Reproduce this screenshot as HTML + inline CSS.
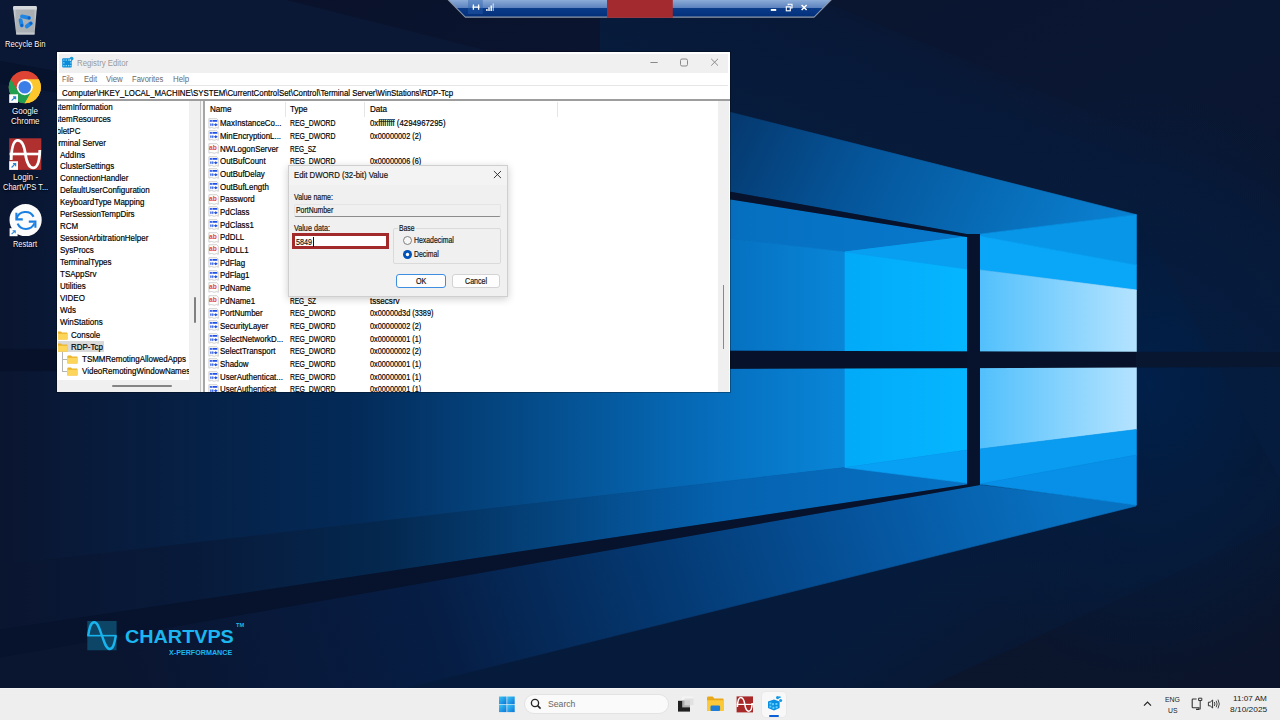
<!DOCTYPE html>
<html><head><meta charset="utf-8">
<style>
*{margin:0;padding:0;box-sizing:border-box}
html,body{width:1280px;height:720px;overflow:hidden;background:#0a1530;font-family:"Liberation Sans",sans-serif;}
.a{position:absolute}
.t{position:absolute;white-space:nowrap;color:#000}
.k{-webkit-text-stroke:0.18px currentColor}
</style></head><body>

<svg class="a" style="left:0;top:0" width="1280" height="720" viewBox="0 0 1280 720">
<defs>
<linearGradient id="bg" x1="0" y1="0" x2="1" y2="1">
<stop offset="0" stop-color="#0a1129"/><stop offset="0.5" stop-color="#0a1733"/><stop offset="1" stop-color="#0b1429"/>
</linearGradient>
<linearGradient id="gCeil" gradientUnits="userSpaceOnUse" x1="640" y1="40" x2="1100" y2="260">
<stop offset="0" stop-color="#0a1836"/><stop offset="0.2" stop-color="#05366a"/><stop offset="0.5" stop-color="#05559a"/><stop offset="1" stop-color="#0a80d0"/>
</linearGradient>
<radialGradient id="glow" gradientUnits="userSpaceOnUse" cx="1150" cy="385" r="300" gradientTransform="translate(1150 385) scale(0.8 1) translate(-1150 -385)">
<stop offset="0" stop-color="#01204a" stop-opacity="1"/><stop offset="0.45" stop-color="#021d42" stop-opacity="0.75"/><stop offset="1" stop-color="#031a3c" stop-opacity="0"/>
</radialGradient>
<linearGradient id="gInCeil" gradientUnits="userSpaceOnUse" x1="0" y1="0" x2="967" y2="0">
<stop offset="0" stop-color="#0a1530"/><stop offset="0.45" stop-color="#05305f"/><stop offset="0.77" stop-color="#0670c0"/><stop offset="1" stop-color="#0878cc"/>
</linearGradient>
<linearGradient id="gWall" gradientUnits="userSpaceOnUse" x1="0" y1="0" x2="845" y2="0">
<stop offset="0" stop-color="#0a1530"/><stop offset="0.42" stop-color="#032a58"/><stop offset="0.86" stop-color="#0670c0"/><stop offset="1" stop-color="#0986d8"/>
</linearGradient>
<linearGradient id="gFloor" gradientUnits="userSpaceOnUse" x1="0" y1="0" x2="967" y2="0">
<stop offset="0" stop-color="#0a1530"/><stop offset="0.2" stop-color="#081a3a"/><stop offset="0.4" stop-color="#04284f"/><stop offset="0.75" stop-color="#0562b0"/><stop offset="1" stop-color="#0872c4"/>
</linearGradient>
<linearGradient id="gBeam" gradientUnits="userSpaceOnUse" x1="150" y1="760" x2="1060" y2="470">
<stop offset="0" stop-color="#0a1530"/><stop offset="0.33" stop-color="#061d44"/><stop offset="0.58" stop-color="#043a74"/><stop offset="0.8" stop-color="#0656a0"/><stop offset="1" stop-color="#0872c2"/>
</linearGradient>
<linearGradient id="gLight" gradientUnits="userSpaceOnUse" x1="980" y1="0" x2="1136" y2="0">
<stop offset="0" stop-color="#52c0fc"/><stop offset="1" stop-color="#b4e3ff"/>
</linearGradient>
<linearGradient id="gBright" gradientUnits="userSpaceOnUse" x1="845" y1="0" x2="967" y2="0">
<stop offset="0" stop-color="#02aaf8"/><stop offset="1" stop-color="#06b6ff"/>
</linearGradient>
</defs>
<rect width="1280" height="720" fill="url(#bg)"/>
<rect width="1280" height="720" fill="url(#glow)"/>
<linearGradient id="gShade" gradientUnits="userSpaceOnUse" x1="1000" y1="520" x2="1120" y2="690"><stop offset="0" stop-color="#051c3e" stop-opacity="0.85"/><stop offset="1" stop-color="#051c3e" stop-opacity="0.1"/></linearGradient>
<polygon points="1136.4,500 1280,470 1280,525 900,700 300,700" fill="url(#gShade)"/>
<linearGradient id="gBand" gradientUnits="userSpaceOnUse" x1="1010" y1="60" x2="930" y2="230"><stop offset="0" stop-color="#071a3a" stop-opacity="0"/><stop offset="0.25" stop-color="#071a3a" stop-opacity="0.75"/><stop offset="1" stop-color="#061c3e" stop-opacity="0.9"/></linearGradient>
<polygon points="600,0 820,0 1280,190 1280,480 1136.4,214.7 600,80" fill="url(#gBand)"/>
<!-- ceiling beam -->
<polygon points="-100,-96.9 1136.4,214.7 980,234.2 967,234.2 -100,43" fill="url(#gCeil)" stroke="url(#gCeil)" stroke-width="0.7" stroke-linejoin="round"/>
<!-- inner ceiling -->
<polygon points="-100,67.7 967,237 845,252 -100,141.6" fill="url(#gInCeil)" stroke="url(#gInCeil)" stroke-width="0.7" stroke-linejoin="round"/>
<!-- wall -->
<polygon points="-100,141.6 845,252 845,467.5 -100,576.9" fill="url(#gWall)" stroke="url(#gWall)" stroke-width="0.7" stroke-linejoin="round"/>
<!-- floor -->
<polygon points="-100,576.9 845,467.5 967,483 967,484.5 -100,644.6" fill="url(#gFloor)" stroke="url(#gFloor)" stroke-width="0.7" stroke-linejoin="round"/>
<!-- floor beam -->
<polygon points="-100,675 980,485 1136,505 1136,506 -100,813.6" fill="url(#gBeam)" stroke="url(#gBeam)" stroke-width="0.7" stroke-linejoin="round"/>
<!-- left panes -->
<polygon points="845,252 967,237 967,358 845,358" fill="url(#gBright)" stroke="url(#gBright)" stroke-width="0.7" stroke-linejoin="round"/>
<polygon points="845,252 967,237 967,269" fill="#089ff0" stroke="#089ff0" stroke-width="0.7" stroke-linejoin="round"/>
<polygon points="845,362 967,362 967,450 845,467.5" fill="url(#gBright)" stroke="url(#gBright)" stroke-width="0.7" stroke-linejoin="round"/>
<polygon points="845,467.5 967,450 967,483" fill="#08a0f5" stroke="#08a0f5" stroke-width="0.7" stroke-linejoin="round"/>
<!-- right panes -->
<polygon points="980,234.2 1136.4,214.7 1136.4,265 980,236" fill="#0896e8" stroke="#0896e8" stroke-width="0.7" stroke-linejoin="round"/>
<polygon points="980,236 1136.4,265 1136.4,290 980,270" fill="#0aa6f8" stroke="#0aa6f8" stroke-width="0.7" stroke-linejoin="round"/>
<polygon points="980,270 1136.4,290 1136.4,358 980,358" fill="url(#gLight)" stroke="url(#gLight)" stroke-width="0.7" stroke-linejoin="round"/>
<polygon points="980,362 1136.4,362 1136.4,429.5 980,449" fill="url(#gLight)" stroke="url(#gLight)" stroke-width="0.7" stroke-linejoin="round"/>
<polygon points="980,449 1136.4,429.5 1136.4,455 980,484" fill="#0a9cf0" stroke="#0a9cf0" stroke-width="0.7" stroke-linejoin="round"/>
<polygon points="980,484 1136.4,455 1136.4,505" fill="#0890e8" stroke="#0890e8" stroke-width="0.7" stroke-linejoin="round"/>
<!-- dark frame lines -->
<polygon points="-100,43 967,234 980,234 980,237 967,237 -100,67.7" fill="#07132c"/>
<polygon points="-100,348.4 1136,351.7 1136,367.5 -100,371.7" fill="#07122a"/>
<polygon points="1136,351.7 1280,352.1 1280,367 1136,367.5" fill="#081630"/>
<rect x="967" y="234" width="13" height="251" fill="#07132c"/>
<polygon points="-100,644.6 967,484.5 980,485 -100,675" fill="#07132c"/>
</svg>
<div class="a" style="left:56.4px;top:51.4px;width:674.2px;height:341.2px;background:rgba(0,0,0,0.3)"></div>
<div class="a" style="left:57px;top:52px;width:673px;height:340px;background:#ffffff"></div>
<div class="a" style="left:59px;top:54px;width:669px;height:18.5px;background:#f0f0f0"></div>
<svg class="a" style="left:61px;top:56px" width="14" height="14" viewBox="0 0 14 14"><rect x="1.2" y="2.2" width="9.6" height="9.4" rx="1" fill="#0a8ad8"/><g fill="#7fdcff"><rect x="2.2" y="3.4" width="1.3" height="1.3"/><rect x="4.6" y="3.4" width="1.3" height="1.3"/><rect x="7" y="3.4" width="1.3" height="1.3"/><rect x="2.2" y="6.2" width="1.3" height="1.3"/><rect x="2.2" y="9" width="1.3" height="1.3"/><rect x="4.6" y="9" width="1.3" height="1.3"/><rect x="7" y="9" width="1.3" height="1.3"/><rect x="9.2" y="9" width="1.3" height="1.3"/><rect x="9.2" y="6.2" width="1.3" height="1.3"/></g><circle cx="10.6" cy="2.6" r="1.9" fill="#1a9ad8"/><circle cx="9.3" cy="4.1" r="0.8" fill="#fff"/></svg>
<div class="t" style="left:77px;top:58px;font-size:8.5px;line-height:10.62px;color:#9a9a9a;transform:scaleX(0.919);transform-origin:0 0;">Registry Editor</div>
<svg class="a" style="left:640px;top:54px" width="88" height="18" viewBox="0 0 88 18"><line x1="10.4" y1="8.5" x2="17.7" y2="8.5" stroke="#8a8a8a" stroke-width="1"/><rect x="40.5" y="5" width="7" height="7" rx="1.5" fill="none" stroke="#8a8a8a" stroke-width="1"/><path d="M71.2 4.8 L78 11.6 M78 4.8 L71.2 11.6" stroke="#8a8a8a" stroke-width="1"/></svg>
<div class="t" style="left:62.1px;top:74px;font-size:8.5px;line-height:10.62px;color:#6a6a6a;transform:scaleX(0.847);transform-origin:0 0;">File</div>
<div class="t" style="left:83.5px;top:74px;font-size:8.5px;line-height:10.62px;color:#6a6a6a;transform:scaleX(0.888);transform-origin:0 0;">Edit</div>
<div class="t" style="left:106px;top:74px;font-size:8.5px;line-height:10.62px;color:#6a6a6a;transform:scaleX(0.917);transform-origin:0 0;">View</div>
<div class="t" style="left:131.9px;top:74px;font-size:8.5px;line-height:10.62px;color:#6a6a6a;transform:scaleX(0.893);transform-origin:0 0;">Favorites</div>
<div class="t" style="left:172.75px;top:74px;font-size:8.5px;line-height:10.62px;color:#6a6a6a;transform:scaleX(0.930);transform-origin:0 0;">Help</div>
<div class="a" style="left:59px;top:85.3px;width:669px;height:1px;background:#e6e6e6"></div>
<div class="t k" style="left:62px;top:88px;font-size:8.5px;line-height:10.62px;color:#000;transform:scaleX(0.924);transform-origin:0 0;">Computer\HKEY_LOCAL_MACHINE\SYSTEM\CurrentControlSet\Control\Terminal Server\WinStations\RDP-Tcp</div>
<div class="a" style="left:57px;top:99.4px;width:673px;height:1.6px;background:#9d9d9d"></div>
<div class="a" style="left:58px;top:101px;width:131px;height:279px;background:#fff;overflow:hidden">
<div class="t k" style="left:-12.22px;top:1px;font-size:8.5px;line-height:10.62px;color:#000;transform:scaleX(0.940);transform-origin:0 0;">SystemInformation</div>
<div class="t k" style="left:-12.22px;top:13px;font-size:8.5px;line-height:10.62px;color:#000;transform:scaleX(0.940);transform-origin:0 0;">SystemResources</div>
<div class="t k" style="left:-10.24px;top:25px;font-size:8.5px;line-height:10.62px;color:#000;transform:scaleX(0.940);transform-origin:0 0;">TabletPC</div>
<div class="t k" style="left:-7.94px;top:37px;font-size:8.5px;line-height:10.62px;color:#000;transform:scaleX(0.940);transform-origin:0 0;">Terminal Server</div>
<div class="t k" style="left:2.0px;top:49px;font-size:8.5px;line-height:10.62px;color:#000;transform:scaleX(0.940);transform-origin:0 0;">AddIns</div>
<div class="t k" style="left:2.0px;top:60px;font-size:8.5px;line-height:10.62px;color:#000;transform:scaleX(0.940);transform-origin:0 0;">ClusterSettings</div>
<div class="t k" style="left:2.0px;top:72px;font-size:8.5px;line-height:10.62px;color:#000;transform:scaleX(0.940);transform-origin:0 0;">ConnectionHandler</div>
<div class="t k" style="left:2.0px;top:84px;font-size:8.5px;line-height:10.62px;color:#000;transform:scaleX(0.940);transform-origin:0 0;">DefaultUserConfiguration</div>
<div class="t k" style="left:2.0px;top:96px;font-size:8.5px;line-height:10.62px;color:#000;transform:scaleX(0.940);transform-origin:0 0;">KeyboardType Mapping</div>
<div class="t k" style="left:2.0px;top:108px;font-size:8.5px;line-height:10.62px;color:#000;transform:scaleX(0.940);transform-origin:0 0;">PerSessionTempDirs</div>
<div class="t k" style="left:2.0px;top:120px;font-size:8.5px;line-height:10.62px;color:#000;transform:scaleX(0.940);transform-origin:0 0;">RCM</div>
<div class="t k" style="left:2.0px;top:132px;font-size:8.5px;line-height:10.62px;color:#000;transform:scaleX(0.940);transform-origin:0 0;">SessionArbitrationHelper</div>
<div class="t k" style="left:2.0px;top:144px;font-size:8.5px;line-height:10.62px;color:#000;transform:scaleX(0.940);transform-origin:0 0;">SysProcs</div>
<div class="t k" style="left:2.0px;top:156px;font-size:8.5px;line-height:10.62px;color:#000;transform:scaleX(0.940);transform-origin:0 0;">TerminalTypes</div>
<div class="t k" style="left:2.0px;top:168px;font-size:8.5px;line-height:10.62px;color:#000;transform:scaleX(0.940);transform-origin:0 0;">TSAppSrv</div>
<div class="t k" style="left:2.0px;top:180px;font-size:8.5px;line-height:10.62px;color:#000;transform:scaleX(0.940);transform-origin:0 0;">Utilities</div>
<div class="t k" style="left:2.0px;top:192px;font-size:8.5px;line-height:10.62px;color:#000;transform:scaleX(0.940);transform-origin:0 0;">VIDEO</div>
<div class="t k" style="left:2.0px;top:204px;font-size:8.5px;line-height:10.62px;color:#000;transform:scaleX(0.940);transform-origin:0 0;">Wds</div>
<div class="t k" style="left:2.0px;top:216px;font-size:8.5px;line-height:10.62px;color:#000;transform:scaleX(0.940);transform-origin:0 0;">WinStations</div>
<div class="a" style="left:0px;top:240.10000000000002px;width:45.599999999999994px;height:11.1px;background:#d9d9d9"></div>
<svg class="a" style="left:-1.4px;top:229.7px" width="11" height="9" viewBox="0 0 11 9"><path d="M0.3 1.3 Q0.3 0.4 1.1 0.4 L4 0.4 L5 1.4 L9.9 1.4 Q10.5 1.4 10.5 2 L10.5 8 Q10.5 8.5 10 8.5 L0.8 8.5 Q0.3 8.5 0.3 8 Z" fill="#eab32a"/><path d="M0.3 2.7 L10.5 2.7 L10.5 8 Q10.5 8.5 10 8.5 L0.8 8.5 Q0.3 8.5 0.3 8 Z" fill="#fdd55a"/></svg>
<div class="t k" style="left:12.8px;top:229px;font-size:8.5px;line-height:10.62px;color:#000;transform:scaleX(0.940);transform-origin:0 0;">Console</div>
<svg class="a" style="left:-1.4px;top:241.6px" width="11" height="9" viewBox="0 0 11 9"><path d="M0.3 1.3 Q0.3 0.4 1.1 0.4 L4 0.4 L5 1.4 L9.9 1.4 Q10.5 1.4 10.5 2 L10.5 8 Q10.5 8.5 10 8.5 L0.8 8.5 Q0.3 8.5 0.3 8 Z" fill="#eab32a"/><path d="M0.3 2.7 L10.5 2.7 L10.5 8 Q10.5 8.5 10 8.5 L0.8 8.5 Q0.3 8.5 0.3 8 Z" fill="#fdd55a"/></svg>
<div class="t k" style="left:12.8px;top:241px;font-size:8.5px;line-height:10.62px;color:#000;transform:scaleX(0.940);transform-origin:0 0;">RDP-Tcp</div>
<div class="a" style="left:4.299999999999997px;top:251px;width:0;height:19px;border-left:0.8px solid #b4b4b4"></div>
<div class="a" style="left:4.299999999999997px;top:258px;width:4.6px;height:0;border-top:0.8px solid #b4b4b4"></div>
<div class="a" style="left:4.299999999999997px;top:270px;width:4.6px;height:0;border-top:0.8px solid #b4b4b4"></div>
<svg class="a" style="left:9.1px;top:253.5px" width="11" height="9" viewBox="0 0 11 9"><path d="M0.3 1.3 Q0.3 0.4 1.1 0.4 L4 0.4 L5 1.4 L9.9 1.4 Q10.5 1.4 10.5 2 L10.5 8 Q10.5 8.5 10 8.5 L0.8 8.5 Q0.3 8.5 0.3 8 Z" fill="#eab32a"/><path d="M0.3 2.7 L10.5 2.7 L10.5 8 Q10.5 8.5 10 8.5 L0.8 8.5 Q0.3 8.5 0.3 8 Z" fill="#fdd55a"/></svg>
<div class="t k" style="left:23.7px;top:253px;font-size:8.5px;line-height:10.62px;color:#000;transform:scaleX(0.940);transform-origin:0 0;">TSMMRemotingAllowedApps</div>
<svg class="a" style="left:9.1px;top:265.5px" width="11" height="9" viewBox="0 0 11 9"><path d="M0.3 1.3 Q0.3 0.4 1.1 0.4 L4 0.4 L5 1.4 L9.9 1.4 Q10.5 1.4 10.5 2 L10.5 8 Q10.5 8.5 10 8.5 L0.8 8.5 Q0.3 8.5 0.3 8 Z" fill="#eab32a"/><path d="M0.3 2.7 L10.5 2.7 L10.5 8 Q10.5 8.5 10 8.5 L0.8 8.5 Q0.3 8.5 0.3 8 Z" fill="#fdd55a"/></svg>
<div class="t k" style="left:23.7px;top:265px;font-size:8.5px;line-height:10.62px;color:#000;transform:scaleX(0.940);transform-origin:0 0;">VideoRemotingWindowNames</div>
</div>
<div class="a" style="left:189.2px;top:101px;width:10.4px;height:279.4px;background:#f0f0f0"></div>
<div class="a" style="left:194px;top:297px;width:1.5px;height:25.5px;background:#808080;border-radius:1px"></div>
<div class="a" style="left:57px;top:380.4px;width:142.6px;height:11.6px;background:#f0f0f0"></div>
<div class="a" style="left:112.4px;top:385px;width:60px;height:1.8px;background:#858585;border-radius:1px"></div>
<div class="a" style="left:199.6px;top:101px;width:1.8px;height:291px;background:#c4c4c4"></div>
<div class="a" style="left:201.4px;top:101px;width:1.8px;height:291px;background:#f6f6f6"></div>
<div class="a" style="left:203.2px;top:101px;width:1.6px;height:291px;background:#a6a6a6"></div>
<div class="t k" style="left:209.5px;top:104px;font-size:8.5px;line-height:10.62px;color:#000;transform:scaleX(0.953);transform-origin:0 0;">Name</div>
<div class="t k" style="left:289.6px;top:104px;font-size:8.5px;line-height:10.62px;color:#000;transform:scaleX(0.950);transform-origin:0 0;">Type</div>
<div class="t k" style="left:369.6px;top:104px;font-size:8.5px;line-height:10.62px;color:#000;transform:scaleX(0.950);transform-origin:0 0;">Data</div>
<div class="a" style="left:285px;top:102px;width:1px;height:15px;background:#e5e5e5"></div>
<div class="a" style="left:364.4px;top:102px;width:1px;height:15px;background:#e5e5e5"></div>
<div class="a" style="left:557px;top:102px;width:1px;height:15px;background:#e5e5e5"></div>
<div class="a" style="left:205px;top:117px;width:513px;height:274.8px;overflow:hidden">
<svg class="a" style="left:2.80px;top:0.80px" width="11" height="11" viewBox="0 0 11 11"><path d="M0.9 0.7 L8.8 0.7 L10.3 2.2 L10.3 10.3 L8.6 9.6 L6.2 10.3 L3.6 9.5 L0.9 10.1 Z" fill="#fdfdfb" stroke="#bdbdbd" stroke-width="0.7"/><g fill="#1f4fe8"><ellipse cx="2.9" cy="2.9" rx="1.3" ry="0.85"/><rect x="4.4" y="2.05" width="5" height="1.7" rx="0.5"/><ellipse cx="2.9" cy="6.8" rx="0.65" ry="1.45"/><ellipse cx="4.8" cy="6.8" rx="0.65" ry="1.45"/><path d="M5.9 6.8 L7.7 5.3 L9.7 6.8 L7.7 8.3 Z"/></g></svg>
<div class="t k" style="left:15px;top:1px;font-size:8.5px;line-height:10.62px;color:#000;transform:scaleX(0.930);transform-origin:0 0;">MaxInstanceCo...</div>
<div class="t k" style="left:84.6px;top:1px;font-size:8.5px;line-height:10.62px;color:#000;transform:scaleX(0.810);transform-origin:0 0;">REG_DWORD</div>
<div class="t k" style="left:164.6px;top:1px;font-size:8.5px;line-height:10.62px;color:#000;transform:scaleX(0.920);transform-origin:0 0;">0xffffffff (4294967295)</div>
<svg class="a" style="left:2.80px;top:13.46px" width="11" height="11" viewBox="0 0 11 11"><path d="M0.9 0.7 L8.8 0.7 L10.3 2.2 L10.3 10.3 L8.6 9.6 L6.2 10.3 L3.6 9.5 L0.9 10.1 Z" fill="#fdfdfb" stroke="#bdbdbd" stroke-width="0.7"/><g fill="#1f4fe8"><ellipse cx="2.9" cy="2.9" rx="1.3" ry="0.85"/><rect x="4.4" y="2.05" width="5" height="1.7" rx="0.5"/><ellipse cx="2.9" cy="6.8" rx="0.65" ry="1.45"/><ellipse cx="4.8" cy="6.8" rx="0.65" ry="1.45"/><path d="M5.9 6.8 L7.7 5.3 L9.7 6.8 L7.7 8.3 Z"/></g></svg>
<div class="t k" style="left:15px;top:14px;font-size:8.5px;line-height:10.62px;color:#000;transform:scaleX(0.930);transform-origin:0 0;">MinEncryptionL...</div>
<div class="t k" style="left:84.6px;top:14px;font-size:8.5px;line-height:10.62px;color:#000;transform:scaleX(0.810);transform-origin:0 0;">REG_DWORD</div>
<div class="t k" style="left:164.6px;top:14px;font-size:8.5px;line-height:10.62px;color:#000;transform:scaleX(0.860);transform-origin:0 0;">0x00000002 (2)</div>
<svg class="a" style="left:2.80px;top:26.12px" width="11" height="11" viewBox="0 0 11 11"><path d="M0.9 0.7 L8.8 0.7 L10.3 2.2 L10.3 10.3 L8.6 9.6 L6.2 10.3 L3.6 9.5 L0.9 10.1 Z" fill="#fdfdfb" stroke="#bdbdbd" stroke-width="0.7"/><text x="1.1" y="7.4" font-family="Liberation Sans" font-size="6.6" font-weight="bold" fill="#e2482c">ab</text></svg>
<div class="t k" style="left:15px;top:27px;font-size:8.5px;line-height:10.62px;color:#000;transform:scaleX(0.930);transform-origin:0 0;">NWLogonServer</div>
<div class="t k" style="left:84.6px;top:27px;font-size:8.5px;line-height:10.62px;color:#000;transform:scaleX(0.765);transform-origin:0 0;">REG_SZ</div>
<svg class="a" style="left:2.80px;top:38.78px" width="11" height="11" viewBox="0 0 11 11"><path d="M0.9 0.7 L8.8 0.7 L10.3 2.2 L10.3 10.3 L8.6 9.6 L6.2 10.3 L3.6 9.5 L0.9 10.1 Z" fill="#fdfdfb" stroke="#bdbdbd" stroke-width="0.7"/><g fill="#1f4fe8"><ellipse cx="2.9" cy="2.9" rx="1.3" ry="0.85"/><rect x="4.4" y="2.05" width="5" height="1.7" rx="0.5"/><ellipse cx="2.9" cy="6.8" rx="0.65" ry="1.45"/><ellipse cx="4.8" cy="6.8" rx="0.65" ry="1.45"/><path d="M5.9 6.8 L7.7 5.3 L9.7 6.8 L7.7 8.3 Z"/></g></svg>
<div class="t k" style="left:15px;top:39px;font-size:8.5px;line-height:10.62px;color:#000;transform:scaleX(0.930);transform-origin:0 0;">OutBufCount</div>
<div class="t k" style="left:84.6px;top:39px;font-size:8.5px;line-height:10.62px;color:#000;transform:scaleX(0.810);transform-origin:0 0;">REG_DWORD</div>
<div class="t k" style="left:164.6px;top:39px;font-size:8.5px;line-height:10.62px;color:#000;transform:scaleX(0.860);transform-origin:0 0;">0x00000006 (6)</div>
<svg class="a" style="left:2.80px;top:51.44px" width="11" height="11" viewBox="0 0 11 11"><path d="M0.9 0.7 L8.8 0.7 L10.3 2.2 L10.3 10.3 L8.6 9.6 L6.2 10.3 L3.6 9.5 L0.9 10.1 Z" fill="#fdfdfb" stroke="#bdbdbd" stroke-width="0.7"/><g fill="#1f4fe8"><ellipse cx="2.9" cy="2.9" rx="1.3" ry="0.85"/><rect x="4.4" y="2.05" width="5" height="1.7" rx="0.5"/><ellipse cx="2.9" cy="6.8" rx="0.65" ry="1.45"/><ellipse cx="4.8" cy="6.8" rx="0.65" ry="1.45"/><path d="M5.9 6.8 L7.7 5.3 L9.7 6.8 L7.7 8.3 Z"/></g></svg>
<div class="t k" style="left:15px;top:52px;font-size:8.5px;line-height:10.62px;color:#000;transform:scaleX(0.930);transform-origin:0 0;">OutBufDelay</div>
<div class="t k" style="left:84.6px;top:52px;font-size:8.5px;line-height:10.62px;color:#000;transform:scaleX(0.810);transform-origin:0 0;">REG_DWORD</div>
<svg class="a" style="left:2.80px;top:64.10px" width="11" height="11" viewBox="0 0 11 11"><path d="M0.9 0.7 L8.8 0.7 L10.3 2.2 L10.3 10.3 L8.6 9.6 L6.2 10.3 L3.6 9.5 L0.9 10.1 Z" fill="#fdfdfb" stroke="#bdbdbd" stroke-width="0.7"/><g fill="#1f4fe8"><ellipse cx="2.9" cy="2.9" rx="1.3" ry="0.85"/><rect x="4.4" y="2.05" width="5" height="1.7" rx="0.5"/><ellipse cx="2.9" cy="6.8" rx="0.65" ry="1.45"/><ellipse cx="4.8" cy="6.8" rx="0.65" ry="1.45"/><path d="M5.9 6.8 L7.7 5.3 L9.7 6.8 L7.7 8.3 Z"/></g></svg>
<div class="t k" style="left:15px;top:65px;font-size:8.5px;line-height:10.62px;color:#000;transform:scaleX(0.930);transform-origin:0 0;">OutBufLength</div>
<div class="t k" style="left:84.6px;top:65px;font-size:8.5px;line-height:10.62px;color:#000;transform:scaleX(0.810);transform-origin:0 0;">REG_DWORD</div>
<svg class="a" style="left:2.80px;top:76.76px" width="11" height="11" viewBox="0 0 11 11"><path d="M0.9 0.7 L8.8 0.7 L10.3 2.2 L10.3 10.3 L8.6 9.6 L6.2 10.3 L3.6 9.5 L0.9 10.1 Z" fill="#fdfdfb" stroke="#bdbdbd" stroke-width="0.7"/><text x="1.1" y="7.4" font-family="Liberation Sans" font-size="6.6" font-weight="bold" fill="#e2482c">ab</text></svg>
<div class="t k" style="left:15px;top:77px;font-size:8.5px;line-height:10.62px;color:#000;transform:scaleX(0.930);transform-origin:0 0;">Password</div>
<div class="t k" style="left:84.6px;top:77px;font-size:8.5px;line-height:10.62px;color:#000;transform:scaleX(0.765);transform-origin:0 0;">REG_SZ</div>
<svg class="a" style="left:2.80px;top:89.42px" width="11" height="11" viewBox="0 0 11 11"><path d="M0.9 0.7 L8.8 0.7 L10.3 2.2 L10.3 10.3 L8.6 9.6 L6.2 10.3 L3.6 9.5 L0.9 10.1 Z" fill="#fdfdfb" stroke="#bdbdbd" stroke-width="0.7"/><g fill="#1f4fe8"><ellipse cx="2.9" cy="2.9" rx="1.3" ry="0.85"/><rect x="4.4" y="2.05" width="5" height="1.7" rx="0.5"/><ellipse cx="2.9" cy="6.8" rx="0.65" ry="1.45"/><ellipse cx="4.8" cy="6.8" rx="0.65" ry="1.45"/><path d="M5.9 6.8 L7.7 5.3 L9.7 6.8 L7.7 8.3 Z"/></g></svg>
<div class="t k" style="left:15px;top:90px;font-size:8.5px;line-height:10.62px;color:#000;transform:scaleX(0.930);transform-origin:0 0;">PdClass</div>
<div class="t k" style="left:84.6px;top:90px;font-size:8.5px;line-height:10.62px;color:#000;transform:scaleX(0.810);transform-origin:0 0;">REG_DWORD</div>
<svg class="a" style="left:2.80px;top:102.08px" width="11" height="11" viewBox="0 0 11 11"><path d="M0.9 0.7 L8.8 0.7 L10.3 2.2 L10.3 10.3 L8.6 9.6 L6.2 10.3 L3.6 9.5 L0.9 10.1 Z" fill="#fdfdfb" stroke="#bdbdbd" stroke-width="0.7"/><g fill="#1f4fe8"><ellipse cx="2.9" cy="2.9" rx="1.3" ry="0.85"/><rect x="4.4" y="2.05" width="5" height="1.7" rx="0.5"/><ellipse cx="2.9" cy="6.8" rx="0.65" ry="1.45"/><ellipse cx="4.8" cy="6.8" rx="0.65" ry="1.45"/><path d="M5.9 6.8 L7.7 5.3 L9.7 6.8 L7.7 8.3 Z"/></g></svg>
<div class="t k" style="left:15px;top:103px;font-size:8.5px;line-height:10.62px;color:#000;transform:scaleX(0.930);transform-origin:0 0;">PdClass1</div>
<div class="t k" style="left:84.6px;top:103px;font-size:8.5px;line-height:10.62px;color:#000;transform:scaleX(0.810);transform-origin:0 0;">REG_DWORD</div>
<svg class="a" style="left:2.80px;top:114.74px" width="11" height="11" viewBox="0 0 11 11"><path d="M0.9 0.7 L8.8 0.7 L10.3 2.2 L10.3 10.3 L8.6 9.6 L6.2 10.3 L3.6 9.5 L0.9 10.1 Z" fill="#fdfdfb" stroke="#bdbdbd" stroke-width="0.7"/><text x="1.1" y="7.4" font-family="Liberation Sans" font-size="6.6" font-weight="bold" fill="#e2482c">ab</text></svg>
<div class="t k" style="left:15px;top:115px;font-size:8.5px;line-height:10.62px;color:#000;transform:scaleX(0.930);transform-origin:0 0;">PdDLL</div>
<div class="t k" style="left:84.6px;top:115px;font-size:8.5px;line-height:10.62px;color:#000;transform:scaleX(0.765);transform-origin:0 0;">REG_SZ</div>
<svg class="a" style="left:2.80px;top:127.40px" width="11" height="11" viewBox="0 0 11 11"><path d="M0.9 0.7 L8.8 0.7 L10.3 2.2 L10.3 10.3 L8.6 9.6 L6.2 10.3 L3.6 9.5 L0.9 10.1 Z" fill="#fdfdfb" stroke="#bdbdbd" stroke-width="0.7"/><text x="1.1" y="7.4" font-family="Liberation Sans" font-size="6.6" font-weight="bold" fill="#e2482c">ab</text></svg>
<div class="t k" style="left:15px;top:128px;font-size:8.5px;line-height:10.62px;color:#000;transform:scaleX(0.930);transform-origin:0 0;">PdDLL1</div>
<div class="t k" style="left:84.6px;top:128px;font-size:8.5px;line-height:10.62px;color:#000;transform:scaleX(0.765);transform-origin:0 0;">REG_SZ</div>
<svg class="a" style="left:2.80px;top:140.06px" width="11" height="11" viewBox="0 0 11 11"><path d="M0.9 0.7 L8.8 0.7 L10.3 2.2 L10.3 10.3 L8.6 9.6 L6.2 10.3 L3.6 9.5 L0.9 10.1 Z" fill="#fdfdfb" stroke="#bdbdbd" stroke-width="0.7"/><g fill="#1f4fe8"><ellipse cx="2.9" cy="2.9" rx="1.3" ry="0.85"/><rect x="4.4" y="2.05" width="5" height="1.7" rx="0.5"/><ellipse cx="2.9" cy="6.8" rx="0.65" ry="1.45"/><ellipse cx="4.8" cy="6.8" rx="0.65" ry="1.45"/><path d="M5.9 6.8 L7.7 5.3 L9.7 6.8 L7.7 8.3 Z"/></g></svg>
<div class="t k" style="left:15px;top:141px;font-size:8.5px;line-height:10.62px;color:#000;transform:scaleX(0.930);transform-origin:0 0;">PdFlag</div>
<div class="t k" style="left:84.6px;top:141px;font-size:8.5px;line-height:10.62px;color:#000;transform:scaleX(0.810);transform-origin:0 0;">REG_DWORD</div>
<svg class="a" style="left:2.80px;top:152.72px" width="11" height="11" viewBox="0 0 11 11"><path d="M0.9 0.7 L8.8 0.7 L10.3 2.2 L10.3 10.3 L8.6 9.6 L6.2 10.3 L3.6 9.5 L0.9 10.1 Z" fill="#fdfdfb" stroke="#bdbdbd" stroke-width="0.7"/><g fill="#1f4fe8"><ellipse cx="2.9" cy="2.9" rx="1.3" ry="0.85"/><rect x="4.4" y="2.05" width="5" height="1.7" rx="0.5"/><ellipse cx="2.9" cy="6.8" rx="0.65" ry="1.45"/><ellipse cx="4.8" cy="6.8" rx="0.65" ry="1.45"/><path d="M5.9 6.8 L7.7 5.3 L9.7 6.8 L7.7 8.3 Z"/></g></svg>
<div class="t k" style="left:15px;top:153px;font-size:8.5px;line-height:10.62px;color:#000;transform:scaleX(0.930);transform-origin:0 0;">PdFlag1</div>
<div class="t k" style="left:84.6px;top:153px;font-size:8.5px;line-height:10.62px;color:#000;transform:scaleX(0.810);transform-origin:0 0;">REG_DWORD</div>
<svg class="a" style="left:2.80px;top:165.38px" width="11" height="11" viewBox="0 0 11 11"><path d="M0.9 0.7 L8.8 0.7 L10.3 2.2 L10.3 10.3 L8.6 9.6 L6.2 10.3 L3.6 9.5 L0.9 10.1 Z" fill="#fdfdfb" stroke="#bdbdbd" stroke-width="0.7"/><text x="1.1" y="7.4" font-family="Liberation Sans" font-size="6.6" font-weight="bold" fill="#e2482c">ab</text></svg>
<div class="t k" style="left:15px;top:166px;font-size:8.5px;line-height:10.62px;color:#000;transform:scaleX(0.930);transform-origin:0 0;">PdName</div>
<div class="t k" style="left:84.6px;top:166px;font-size:8.5px;line-height:10.62px;color:#000;transform:scaleX(0.765);transform-origin:0 0;">REG_SZ</div>
<svg class="a" style="left:2.80px;top:178.04px" width="11" height="11" viewBox="0 0 11 11"><path d="M0.9 0.7 L8.8 0.7 L10.3 2.2 L10.3 10.3 L8.6 9.6 L6.2 10.3 L3.6 9.5 L0.9 10.1 Z" fill="#fdfdfb" stroke="#bdbdbd" stroke-width="0.7"/><text x="1.1" y="7.4" font-family="Liberation Sans" font-size="6.6" font-weight="bold" fill="#e2482c">ab</text></svg>
<div class="t k" style="left:15px;top:179px;font-size:8.5px;line-height:10.62px;color:#000;transform:scaleX(0.930);transform-origin:0 0;">PdName1</div>
<div class="t k" style="left:84.6px;top:179px;font-size:8.5px;line-height:10.62px;color:#000;transform:scaleX(0.765);transform-origin:0 0;">REG_SZ</div>
<div class="t k" style="left:164.6px;top:179px;font-size:8.5px;line-height:10.62px;color:#000;transform:scaleX(0.950);transform-origin:0 0;">tssecsrv</div>
<svg class="a" style="left:2.80px;top:190.70px" width="11" height="11" viewBox="0 0 11 11"><path d="M0.9 0.7 L8.8 0.7 L10.3 2.2 L10.3 10.3 L8.6 9.6 L6.2 10.3 L3.6 9.5 L0.9 10.1 Z" fill="#fdfdfb" stroke="#bdbdbd" stroke-width="0.7"/><g fill="#1f4fe8"><ellipse cx="2.9" cy="2.9" rx="1.3" ry="0.85"/><rect x="4.4" y="2.05" width="5" height="1.7" rx="0.5"/><ellipse cx="2.9" cy="6.8" rx="0.65" ry="1.45"/><ellipse cx="4.8" cy="6.8" rx="0.65" ry="1.45"/><path d="M5.9 6.8 L7.7 5.3 L9.7 6.8 L7.7 8.3 Z"/></g></svg>
<div class="t k" style="left:15px;top:191px;font-size:8.5px;line-height:10.62px;color:#000;transform:scaleX(0.930);transform-origin:0 0;">PortNumber</div>
<div class="t k" style="left:84.6px;top:191px;font-size:8.5px;line-height:10.62px;color:#000;transform:scaleX(0.810);transform-origin:0 0;">REG_DWORD</div>
<div class="t k" style="left:164.6px;top:191px;font-size:8.5px;line-height:10.62px;color:#000;transform:scaleX(0.860);transform-origin:0 0;">0x00000d3d (3389)</div>
<svg class="a" style="left:2.80px;top:203.36px" width="11" height="11" viewBox="0 0 11 11"><path d="M0.9 0.7 L8.8 0.7 L10.3 2.2 L10.3 10.3 L8.6 9.6 L6.2 10.3 L3.6 9.5 L0.9 10.1 Z" fill="#fdfdfb" stroke="#bdbdbd" stroke-width="0.7"/><g fill="#1f4fe8"><ellipse cx="2.9" cy="2.9" rx="1.3" ry="0.85"/><rect x="4.4" y="2.05" width="5" height="1.7" rx="0.5"/><ellipse cx="2.9" cy="6.8" rx="0.65" ry="1.45"/><ellipse cx="4.8" cy="6.8" rx="0.65" ry="1.45"/><path d="M5.9 6.8 L7.7 5.3 L9.7 6.8 L7.7 8.3 Z"/></g></svg>
<div class="t k" style="left:15px;top:204px;font-size:8.5px;line-height:10.62px;color:#000;transform:scaleX(0.930);transform-origin:0 0;">SecurityLayer</div>
<div class="t k" style="left:84.6px;top:204px;font-size:8.5px;line-height:10.62px;color:#000;transform:scaleX(0.810);transform-origin:0 0;">REG_DWORD</div>
<div class="t k" style="left:164.6px;top:204px;font-size:8.5px;line-height:10.62px;color:#000;transform:scaleX(0.860);transform-origin:0 0;">0x00000002 (2)</div>
<svg class="a" style="left:2.80px;top:216.02px" width="11" height="11" viewBox="0 0 11 11"><path d="M0.9 0.7 L8.8 0.7 L10.3 2.2 L10.3 10.3 L8.6 9.6 L6.2 10.3 L3.6 9.5 L0.9 10.1 Z" fill="#fdfdfb" stroke="#bdbdbd" stroke-width="0.7"/><g fill="#1f4fe8"><ellipse cx="2.9" cy="2.9" rx="1.3" ry="0.85"/><rect x="4.4" y="2.05" width="5" height="1.7" rx="0.5"/><ellipse cx="2.9" cy="6.8" rx="0.65" ry="1.45"/><ellipse cx="4.8" cy="6.8" rx="0.65" ry="1.45"/><path d="M5.9 6.8 L7.7 5.3 L9.7 6.8 L7.7 8.3 Z"/></g></svg>
<div class="t k" style="left:15px;top:217px;font-size:8.5px;line-height:10.62px;color:#000;transform:scaleX(0.930);transform-origin:0 0;">SelectNetworkD...</div>
<div class="t k" style="left:84.6px;top:217px;font-size:8.5px;line-height:10.62px;color:#000;transform:scaleX(0.810);transform-origin:0 0;">REG_DWORD</div>
<div class="t k" style="left:164.6px;top:217px;font-size:8.5px;line-height:10.62px;color:#000;transform:scaleX(0.860);transform-origin:0 0;">0x00000001 (1)</div>
<svg class="a" style="left:2.80px;top:228.68px" width="11" height="11" viewBox="0 0 11 11"><path d="M0.9 0.7 L8.8 0.7 L10.3 2.2 L10.3 10.3 L8.6 9.6 L6.2 10.3 L3.6 9.5 L0.9 10.1 Z" fill="#fdfdfb" stroke="#bdbdbd" stroke-width="0.7"/><g fill="#1f4fe8"><ellipse cx="2.9" cy="2.9" rx="1.3" ry="0.85"/><rect x="4.4" y="2.05" width="5" height="1.7" rx="0.5"/><ellipse cx="2.9" cy="6.8" rx="0.65" ry="1.45"/><ellipse cx="4.8" cy="6.8" rx="0.65" ry="1.45"/><path d="M5.9 6.8 L7.7 5.3 L9.7 6.8 L7.7 8.3 Z"/></g></svg>
<div class="t k" style="left:15px;top:229px;font-size:8.5px;line-height:10.62px;color:#000;transform:scaleX(0.930);transform-origin:0 0;">SelectTransport</div>
<div class="t k" style="left:84.6px;top:229px;font-size:8.5px;line-height:10.62px;color:#000;transform:scaleX(0.810);transform-origin:0 0;">REG_DWORD</div>
<div class="t k" style="left:164.6px;top:229px;font-size:8.5px;line-height:10.62px;color:#000;transform:scaleX(0.860);transform-origin:0 0;">0x00000002 (2)</div>
<svg class="a" style="left:2.80px;top:241.34px" width="11" height="11" viewBox="0 0 11 11"><path d="M0.9 0.7 L8.8 0.7 L10.3 2.2 L10.3 10.3 L8.6 9.6 L6.2 10.3 L3.6 9.5 L0.9 10.1 Z" fill="#fdfdfb" stroke="#bdbdbd" stroke-width="0.7"/><g fill="#1f4fe8"><ellipse cx="2.9" cy="2.9" rx="1.3" ry="0.85"/><rect x="4.4" y="2.05" width="5" height="1.7" rx="0.5"/><ellipse cx="2.9" cy="6.8" rx="0.65" ry="1.45"/><ellipse cx="4.8" cy="6.8" rx="0.65" ry="1.45"/><path d="M5.9 6.8 L7.7 5.3 L9.7 6.8 L7.7 8.3 Z"/></g></svg>
<div class="t k" style="left:15px;top:242px;font-size:8.5px;line-height:10.62px;color:#000;transform:scaleX(0.930);transform-origin:0 0;">Shadow</div>
<div class="t k" style="left:84.6px;top:242px;font-size:8.5px;line-height:10.62px;color:#000;transform:scaleX(0.810);transform-origin:0 0;">REG_DWORD</div>
<div class="t k" style="left:164.6px;top:242px;font-size:8.5px;line-height:10.62px;color:#000;transform:scaleX(0.860);transform-origin:0 0;">0x00000001 (1)</div>
<svg class="a" style="left:2.80px;top:254.00px" width="11" height="11" viewBox="0 0 11 11"><path d="M0.9 0.7 L8.8 0.7 L10.3 2.2 L10.3 10.3 L8.6 9.6 L6.2 10.3 L3.6 9.5 L0.9 10.1 Z" fill="#fdfdfb" stroke="#bdbdbd" stroke-width="0.7"/><g fill="#1f4fe8"><ellipse cx="2.9" cy="2.9" rx="1.3" ry="0.85"/><rect x="4.4" y="2.05" width="5" height="1.7" rx="0.5"/><ellipse cx="2.9" cy="6.8" rx="0.65" ry="1.45"/><ellipse cx="4.8" cy="6.8" rx="0.65" ry="1.45"/><path d="M5.9 6.8 L7.7 5.3 L9.7 6.8 L7.7 8.3 Z"/></g></svg>
<div class="t k" style="left:15px;top:255px;font-size:8.5px;line-height:10.62px;color:#000;transform:scaleX(0.930);transform-origin:0 0;">UserAuthenticat...</div>
<div class="t k" style="left:84.6px;top:255px;font-size:8.5px;line-height:10.62px;color:#000;transform:scaleX(0.810);transform-origin:0 0;">REG_DWORD</div>
<div class="t k" style="left:164.6px;top:255px;font-size:8.5px;line-height:10.62px;color:#000;transform:scaleX(0.860);transform-origin:0 0;">0x00000001 (1)</div>
<svg class="a" style="left:2.80px;top:266.66px" width="11" height="11" viewBox="0 0 11 11"><path d="M0.9 0.7 L8.8 0.7 L10.3 2.2 L10.3 10.3 L8.6 9.6 L6.2 10.3 L3.6 9.5 L0.9 10.1 Z" fill="#fdfdfb" stroke="#bdbdbd" stroke-width="0.7"/><g fill="#1f4fe8"><ellipse cx="2.9" cy="2.9" rx="1.3" ry="0.85"/><rect x="4.4" y="2.05" width="5" height="1.7" rx="0.5"/><ellipse cx="2.9" cy="6.8" rx="0.65" ry="1.45"/><ellipse cx="4.8" cy="6.8" rx="0.65" ry="1.45"/><path d="M5.9 6.8 L7.7 5.3 L9.7 6.8 L7.7 8.3 Z"/></g></svg>
<div class="t k" style="left:15px;top:267px;font-size:8.5px;line-height:10.62px;color:#000;transform:scaleX(0.930);transform-origin:0 0;">UserAuthenticat</div>
<div class="t k" style="left:84.6px;top:267px;font-size:8.5px;line-height:10.62px;color:#000;transform:scaleX(0.810);transform-origin:0 0;">REG_DWORD</div>
<div class="t k" style="left:164.6px;top:267px;font-size:8.5px;line-height:10.62px;color:#000;transform:scaleX(0.860);transform-origin:0 0;">0x00000001 (1)</div>
</div>
<div class="a" style="left:718px;top:101px;width:10.5px;height:291px;background:#efefef"></div>
<div class="a" style="left:722.7px;top:285.3px;width:1.2px;height:64px;background:#888"></div>
<div class="a" style="left:287.5px;top:165px;width:220px;height:132px;background:#f0f0f0;border:1px solid #cfcfcf;box-shadow:0 2px 8px rgba(0,0,0,0.2)"></div>
<div class="a" style="left:288.5px;top:166px;width:218px;height:19px;background:#f3f3f3"></div>
<div class="t k" style="left:293.5px;top:170px;font-size:8.5px;line-height:10.62px;color:#111;transform:scaleX(0.914);transform-origin:0 0;">Edit DWORD (32-bit) Value</div>
<svg class="a" style="left:492px;top:169px" width="11" height="11" viewBox="0 0 11 11"><path d="M1.9 2 L9 9.1 M9 2 L1.9 9.1" stroke="#222" stroke-width="0.9"/></svg>
<div class="t k" style="left:294px;top:192px;font-size:8.4px;line-height:10.5px;color:#111;transform:scaleX(0.840);transform-origin:0 0;">Value name:</div>
<div class="a" style="left:294.4px;top:203.7px;width:206.2px;height:13.8px;background:#f0f0f0;border:1px solid #e4e4e4;border-bottom:1.6px solid #8c8c8c;border-radius:2px"></div>
<div class="t k" style="left:296.1px;top:205px;font-size:8.4px;line-height:10.5px;color:#111;transform:scaleX(0.824);transform-origin:0 0;">PortNumber</div>
<div class="t k" style="left:294px;top:223px;font-size:8.4px;line-height:10.5px;color:#111;transform:scaleX(0.860);transform-origin:0 0;">Value data:</div>
<div class="a" style="left:292.3px;top:233.1px;width:96.5px;height:15.7px;background:#fff;border:3.2px solid #a32a2a"></div>
<div class="t k" style="left:296px;top:237px;font-size:8.4px;line-height:10.5px;color:#111;transform:scaleX(0.856);transform-origin:0 0;">5849</div>
<div class="a" style="left:312.6px;top:237px;width:0.9px;height:9.5px;background:#111"></div>
<div class="a" style="left:393px;top:228px;width:108px;height:36px;border:1px solid #dadada;border-radius:2px"></div>
<div class="a" style="left:398px;top:224px;width:18px;height:8px;background:#f0f0f0"></div>
<div class="t k" style="left:399.4px;top:223px;font-size:8.4px;line-height:10.5px;color:#111;transform:scaleX(0.815);transform-origin:0 0;">Base</div>
<svg class="a" style="left:401px;top:233.5px" width="13" height="27" viewBox="0 0 13 27"><circle cx="6.5" cy="6.5" r="4" fill="#f6f6f6" stroke="#808080" stroke-width="1"/><circle cx="6.5" cy="20.5" r="4.5" fill="#0052b8"/><circle cx="6.5" cy="20.5" r="1.7" fill="#fff"/></svg>
<div class="t k" style="left:414.2px;top:235px;font-size:8.4px;line-height:10.5px;color:#111;transform:scaleX(0.824);transform-origin:0 0;">Hexadecimal</div>
<div class="t k" style="left:414.1px;top:249px;font-size:8.4px;line-height:10.5px;color:#111;transform:scaleX(0.821);transform-origin:0 0;">Decimal</div>
<div class="a" style="left:396.4px;top:273.9px;width:49.2px;height:14.3px;background:#fdfdfd;border:1.5px solid #3d8de0;border-radius:3px"></div>
<div class="t k" style="left:415.8px;top:276px;font-size:8.4px;line-height:10.5px;color:#111;transform:scaleX(0.857);transform-origin:0 0;">OK</div>
<div class="a" style="left:452.2px;top:274.3px;width:48.1px;height:13.4px;background:#fdfdfd;border:1px solid #d3d3d3;border-radius:3px"></div>
<div class="t k" style="left:464.9px;top:276px;font-size:8.4px;line-height:10.5px;color:#111;transform:scaleX(0.849);transform-origin:0 0;">Cancel</div>
<svg class="a" style="left:0;top:0" width="56" height="260" viewBox="0 0 56 260"><defs><linearGradient id="binG" x1="0" y1="0" x2="1" y2="0"><stop offset="0" stop-color="#d4d8dc"/><stop offset="0.14" stop-color="#aeb3b8"/><stop offset="0.86" stop-color="#a9aeb3"/><stop offset="1" stop-color="#cdd1d5"/></linearGradient></defs><path d="M13.2 8.6 L36.8 8.6 L34.5 34.5 L16.2 34.5 Z" fill="url(#binG)"/><path d="M13 7.2 Q13.1 6 14.3 6 L35.7 6 Q36.9 6 36.9 7.2 L36.8 9.6 L13.2 9.6 Z" fill="#d6d9dc"/><path d="M16.3 32.6 L34.5 32.6 L34.4 34.6 L16.5 34.6 Z" fill="#c4c8cc"/><g fill="none" stroke="#1f86e4" stroke-width="3.9" stroke-linecap="round"><path d="M22 16.4 L29 17.9"/><path d="M20.6 20.2 L21.8 25.4"/><path d="M30.8 23.4 L26.8 26.4"/></g><g fill="#0d5fc4"><circle cx="29" cy="17.9" r="1.4"/><circle cx="21.8" cy="25.4" r="1.4"/><circle cx="30.8" cy="23.4" r="1.4"/></g><circle cx="24.8" cy="87.2" r="16" fill="#dd4433"/><path d="M24.8 87.2 L10.9 79.2 A16 16 0 0 0 24.8 103.2 Z" fill="#22a050"/><path d="M24.8 87.2 L38.7 79.2 A16 16 0 0 1 24.8 103.2 Z" fill="#fbc72c"/><path d="M24.8 79.2 L38.7 79.2 A16 16 0 0 0 10.9 79.2 L17.9 91.2 Z" fill="#dd4433"/><path d="M17.9 91.2 L24.8 103.2 L31.7 91.2 Z" fill="#22a050"/><path d="M31.7 91.2 L24.8 103.2 A16 16 0 0 0 38.7 79.2 L24.8 79.2 Z" fill="#fbc72c"/><circle cx="24.8" cy="87.2" r="8" fill="#fff"/><circle cx="24.8" cy="87.2" r="6.3" fill="#3b7ee8"/><rect x="9.2" y="94.3" width="8.8" height="8.6" fill="#fdfdfd"/><path d="M11.6 100.6 L15.4 96.8 M13 96.8 L15.6 96.8 L15.6 99.3" stroke="#2b86d8" stroke-width="1.2" fill="none"/><rect x="9.2" y="138.3" width="32.1" height="31.6" fill="#b02f2f"/><path d="M9.6 154 L41 154" stroke="#fff" stroke-width="2.6"/><path d="M11.2 160 C11.5 146 13.5 140.3 17.8 140.3 C22.3 140.3 24.3 146 25.4 154 C26.6 162 28.5 167.8 33.2 167.8 C37.8 167.8 39.6 161 39.8 150" fill="none" stroke="#fff" stroke-width="2.8"/><rect x="9.2" y="161.2" width="8.8" height="8.7" fill="#fdfdfd"/><path d="M11.6 167.5 L15.4 163.7 M13 163.7 L15.6 163.7 L15.6 166.2" stroke="#2b86d8" stroke-width="1.2" fill="none"/><circle cx="25.6" cy="220" r="16.1" fill="#fbfbfb"/><g fill="none" stroke="#1a7fe2" stroke-width="2.1"><path d="M16.6 218.8 A9.2 9.2 0 0 1 33.6 216.8"/><path d="M16.4 212.8 L16.4 219.4 L22.8 219.4"/><path d="M17.6 223.6 A9.2 9.2 0 0 0 34.4 223.4"/><path d="M35.4 227.8 L35.4 221.6 L28.8 221.6"/></g><rect x="9.6" y="228.2" width="8" height="8" fill="#fdfdfd"/><path d="M11.6 234.2 L15 230.8 M12.6 230.8 L15.2 230.8 L15.2 233.2" stroke="#2b86d8" stroke-width="1.1" fill="none"/></svg>
<div class="t" style="left:5.1px;top:39px;font-size:8.6px;line-height:10.75px;color:#fff;transform:scaleX(0.890);transform-origin:0 0;text-shadow:0 0 1px #000,0 1px 1.5px #000;">Recycle Bin</div>
<div class="t" style="left:11.7px;top:106px;font-size:8.6px;line-height:10.75px;color:#fff;transform:scaleX(0.938);transform-origin:0 0;text-shadow:0 0 1px #000,0 1px 1.5px #000;">Google</div>
<div class="t" style="left:11px;top:116px;font-size:8.6px;line-height:10.75px;color:#fff;transform:scaleX(0.935);transform-origin:0 0;text-shadow:0 0 1px #000,0 1px 1.5px #000;">Chrome</div>
<div class="t" style="left:12.5px;top:172px;font-size:8.6px;line-height:10.75px;color:#fff;transform:scaleX(0.958);transform-origin:0 0;text-shadow:0 0 1px #000,0 1px 1.5px #000;">Login -</div>
<div class="t" style="left:2.9px;top:182px;font-size:8.6px;line-height:10.75px;color:#fff;transform:scaleX(0.870);transform-origin:0 0;text-shadow:0 0 1px #000,0 1px 1.5px #000;">ChartVPS T...</div>
<div class="t" style="left:13.3px;top:239px;font-size:8.6px;line-height:10.75px;color:#fff;transform:scaleX(0.866);transform-origin:0 0;text-shadow:0 0 1px #000,0 1px 1.5px #000;">Restart</div>
<svg class="a" style="left:86px;top:620px" width="32" height="32" viewBox="0 0 32 32"><rect x="1.3" y="1" width="29.3" height="29.3" fill="#0c4565"/><path d="M1.3 15.65 L30.6 15.65" stroke="#18b4ee" stroke-width="1.6"/><path d="M2.2 15.65 C3.6 6.5 5 2.3 8.3 2.3 C11.8 2.3 13.5 9 15.95 15.65 C18.4 22.3 20.1 29 23.6 29 C26.9 29 28.4 24.6 29.8 15.65" fill="none" stroke="#18b4ee" stroke-width="2.4"/></svg>
<div class="t" style="left:124.8px;top:625px;font-size:19.2px;line-height:24.0px;color:#1cb6f0;transform:scaleX(1.031);transform-origin:0 0;font-weight:bold;">CHARTVPS</div>
<div class="t" style="left:235.8px;top:622px;font-size:5.6px;line-height:7.0px;color:#1cb6f0;transform:scaleX(1.014);transform-origin:0 0;font-weight:bold;">TM</div>
<div class="t" style="left:169.4px;top:648px;font-size:7.2px;line-height:9.0px;color:#1cb6f0;transform:scaleX(0.995);transform-origin:0 0;font-weight:bold;">X-PERFORMANCE</div>
<svg class="a" style="left:440px;top:0" width="400" height="20" viewBox="440 0 400 20"><defs><linearGradient id="rdpG" x1="0" y1="0" x2="0" y2="1"><stop offset="0" stop-color="#8cacd8"/><stop offset="0.46" stop-color="#5e84bf"/><stop offset="0.5" stop-color="#0a3c8a"/><stop offset="1" stop-color="#03307a"/></linearGradient></defs><path d="M447.6 0 L831.8 0 L814.2 17.8 L465.2 17.8 Z" fill="#8c98aa"/><path d="M449.2 0 L830.2 0 L814 16.4 L465.4 16.4 Z" fill="url(#rdpG)"/><rect x="468" y="0" width="14.8" height="14" fill="#2a62ae" opacity="0.4"/><path d="M472.4 7.2 L479.6 7.2 M473.4 4.6 L473.4 9.8 M478.6 4.6 L478.6 9.8" stroke="#fff" stroke-width="1.3"/><g fill="#fff"><rect x="486.2" y="9" width="1.4" height="2"/><rect x="488.3" y="7.4" width="1.4" height="3.6"/><rect x="490.5" y="5.5" width="1.4" height="5.5"/><rect x="492.7" y="3.4" width="1" height="7.6" opacity="0.75"/></g><rect x="607" y="0" width="65.8" height="17.8" fill="#a32b2f"/><rect x="770.8" y="9" width="5.4" height="1.9" fill="#fff"/><rect x="786.3" y="6.8" width="4" height="4" fill="none" stroke="#fff" stroke-width="1.1"/><path d="M788.2 5.2 L788.2 4.2 L792 4.2 L792 8 L791 8" fill="none" stroke="#fff" stroke-width="1.1"/><path d="M801.6 5 L806.6 10 M806.6 5 L801.6 10" stroke="#fff" stroke-width="1.5"/></svg>
<div class="a" style="left:0;top:688px;width:1280px;height:32px;background:#eeeeee;border-top:1px solid #f4f4f4"></div>
<svg class="a" style="left:498px;top:696px" width="18" height="17" viewBox="0 0 18 17"><defs><linearGradient id="stG" x1="0" y1="0" x2="1" y2="1"><stop offset="0" stop-color="#3cc8f8"/><stop offset="1" stop-color="#0a74d8"/></linearGradient></defs><rect x="1" y="0.5" width="7.5" height="7.5" fill="url(#stG)"/><rect x="9.2" y="0.5" width="7.5" height="7.5" fill="url(#stG)"/><rect x="1" y="8.6" width="7.5" height="7.5" fill="url(#stG)"/><rect x="9.2" y="8.6" width="7.5" height="7.5" fill="url(#stG)"/></svg>
<div class="a" style="left:523.6px;top:693.7px;width:145.8px;height:20.8px;background:#fafafa;border:1px solid #e3e3e3;border-radius:11px"></div>
<svg class="a" style="left:530px;top:698px" width="12" height="12" viewBox="0 0 12 12"><circle cx="5" cy="5" r="3.6" fill="none" stroke="#222" stroke-width="1.3"/><path d="M7.6 7.6 L10.6 10.6" stroke="#222" stroke-width="1.5"/></svg>
<div class="t" style="left:547.8px;top:699px;font-size:9px;line-height:11.25px;color:#666;transform:scaleX(0.961);transform-origin:0 0;">Search</div>
<svg class="a" style="left:676px;top:695px" width="20" height="18" viewBox="0 0 20 18"><rect x="6" y="1.6" width="11.5" height="10" fill="#f4f4f4"/><rect x="2" y="5.8" width="12" height="10.8" fill="#202020"/><rect x="6.2" y="5.8" width="7.8" height="6.6" fill="#b0b0b0"/><rect x="8.5" y="3.4" width="9" height="7" fill="#dcdcdc" opacity="0.8"/></svg>
<svg class="a" style="left:706px;top:695px" width="19" height="17" viewBox="0 0 19 17"><path d="M1 3 Q1 1.6 2.3 1.6 L6.6 1.6 L8.4 3.4 L16.6 3.4 Q17.6 3.4 17.6 4.4 L17.6 15.2 Q17.6 16 16.8 16 L1.8 16 Q1 16 1 15.2 Z" fill="#e8a818"/><path d="M1 5.2 L17.6 5.2 L17.6 15.2 Q17.6 16 16.8 16 L1.8 16 Q1 16 1 15.2 Z" fill="#fcc93a"/><rect x="4.5" y="10.6" width="9.6" height="5.4" rx="1.2" fill="#1d7ed8"/></svg>
<svg class="a" style="left:736px;top:695.5px" width="18" height="17" viewBox="0 0 18 17"><rect x="0.6" y="0.4" width="16.4" height="16" fill="#a82828"/><path d="M0.6 8.4 L17 8.4" stroke="#fff" stroke-width="1.2"/><path d="M1.4 11 C1.6 4 2.6 1.4 4.8 1.4 C7.2 1.4 8.2 4.4 8.8 8.4 C9.4 12.4 10.4 15.2 12.8 15.2 C15.2 15.2 16 12 16.2 7" fill="none" stroke="#fff" stroke-width="1.5"/></svg>
<div class="a" style="left:761.8px;top:691.7px;width:24.6px;height:25px;background:#f8f8f8;border-radius:4px;box-shadow:0 0 0 0.6px #e4e4e4"></div>
<svg class="a" style="left:766px;top:695px" width="17" height="17" viewBox="0 0 17 17"><g fill="#0a8ee0"><path d="M2 6.5 L8 4.4 L13.6 6.6 L13.6 13 L8 15.4 L2 13 Z"/></g><g fill="#63d0ff"><rect x="3.4" y="7.4" width="2" height="2"/><rect x="6" y="8.2" width="2" height="2"/><rect x="9.4" y="8" width="2" height="2"/><rect x="3.4" y="10.6" width="2" height="2"/><rect x="6.4" y="11.8" width="2" height="2"/><rect x="9.6" y="11.2" width="2" height="2"/></g><circle cx="11.6" cy="2.6" r="1.6" fill="#1298e6"/><circle cx="14.6" cy="5.4" r="1.5" fill="#1298e6"/><circle cx="13.8" cy="2.2" r="0.9" fill="#1298e6"/></svg>
<div class="a" style="left:768.9px;top:715px;width:10.4px;height:1.8px;background:#0a5fd8;border-radius:1px"></div>
<svg class="a" style="left:1142px;top:699px" width="11" height="9" viewBox="0 0 11 9"><path d="M2 6.6 L5.5 3 L9 6.6" fill="none" stroke="#222" stroke-width="1.2"/></svg>
<div class="t" style="left:1165px;top:695px;font-size:7.4px;line-height:9.25px;color:#222;transform:scaleX(0.935);transform-origin:0 0;">ENG</div>
<div class="t" style="left:1168px;top:706px;font-size:7.4px;line-height:9.25px;color:#222;transform:scaleX(0.924);transform-origin:0 0;">US</div>
<svg class="a" style="left:1190px;top:697px" width="32" height="14" viewBox="0 0 32 14"><path d="M6.6 2 L3 2 Q2.2 2 2.2 2.8 L2.2 10 Q2.2 10.8 3 10.8 L9 10.8 L9 12.4 L6 12.4" fill="none" stroke="#333" stroke-width="1.1"/><path d="M10.2 3.6 L10.2 12.4 M8.6 3.5 L11.8 3.5 L11.8 1.2 L8.6 1.2 Z" fill="none" stroke="#333" stroke-width="1"/><path d="M18.4 5.2 L20.2 5.2 L22.6 3 L22.6 11 L20.2 8.8 L18.4 8.8 Z" fill="none" stroke="#333" stroke-width="1"/><path d="M24.4 5 Q25.4 7 24.4 9 M26.2 3.8 Q28 7 26.2 10.2 M28 2.6 Q30.6 7 28 11.4" fill="none" stroke="#333" stroke-width="0.9"/></svg>
<div class="t" style="left:1233px;top:694px;font-size:7.4px;line-height:9.25px;color:#222;transform:scaleX(1.104);transform-origin:0 0;">11:07 AM</div>
<div class="t" style="left:1230px;top:705px;font-size:7.4px;line-height:9.25px;color:#222;transform:scaleX(1.132);transform-origin:0 0;">8/10/2025</div>
</body></html>
